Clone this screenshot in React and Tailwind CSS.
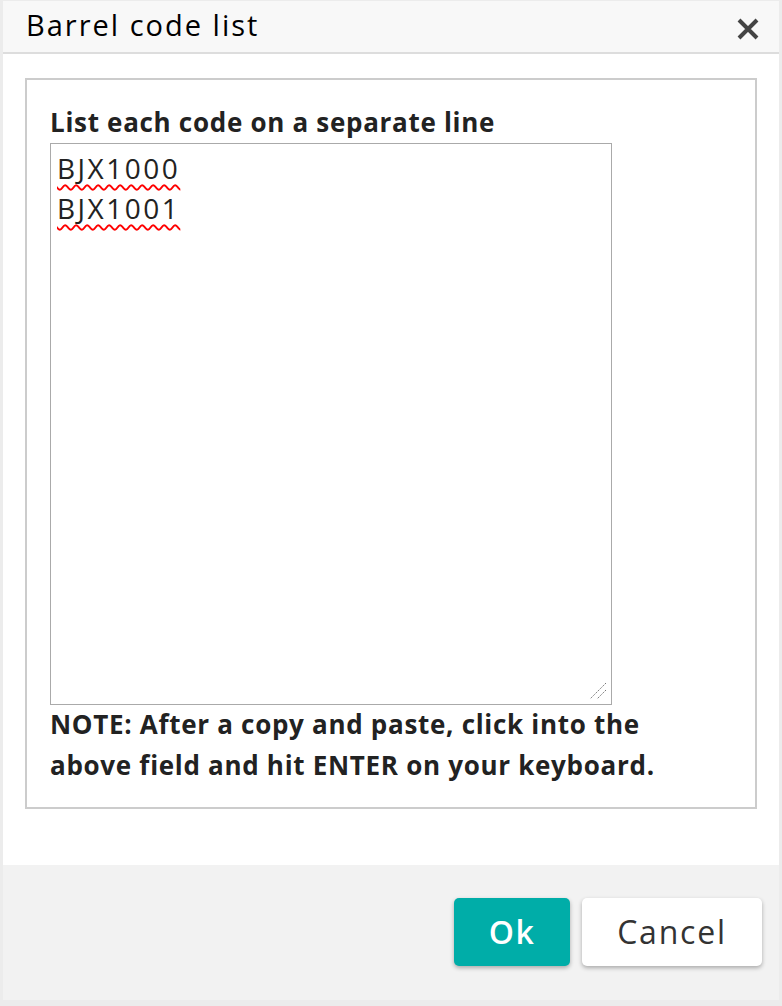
import React from 'react';

const codes = ['BJX1000', 'BJX1001'];

const CloseIcon = () => (
  <svg width="24" height="24" viewBox="0 0 24 24" fill="none">
    <path d="M3 3 L21 21 M21 3 L3 21" stroke="#444" strokeWidth="4" strokeLinecap="butt" />
  </svg>
);

const ResizeGrip = () => (
  <svg width="20" height="20" viewBox="0 0 20 20" className="absolute right-[3px] bottom-[3px]">
    <path d="M18 2 L2 18 M18 9 L9 18" stroke="#777" strokeWidth="1" strokeDasharray="1.5 1" />
  </svg>
);

const App = () => {
  return (
    <div className="w-[782px] h-[1006px] bg-[#ececec] pt-[1px] pl-[3px] pr-[3px] pb-[6px] font-['Open_Sans',sans-serif] text-[#222]">
      <div className="h-full flex flex-col bg-white">
        <div className="h-[53px] flex items-center justify-between pl-[23px] pr-[19px] bg-[#f8f8f8] border-b-2 border-[#dddddd]">
          <h1 className="mb-[4px] text-[29px] font-medium tracking-[2px] text-black leading-none">Barrel code list</h1>
          <button className="mt-[5px]"><CloseIcon /></button>
        </div>

        <div className="flex-1 px-[22px] pt-[24px]">
          <div className="h-[731px] border-2 border-[#cccccc] pl-[23px] pt-[24px]">
            <label className="block mb-[3px] text-[26px] font-bold tracking-[0.7px] leading-[36px] text-[#222]">
              List each code on a separate line
            </label>
            <div className="relative w-[562px] h-[562px] border border-[#aaaaaa] px-[6px] pt-[4px] text-[28px] tracking-[2.5px] leading-[40px] text-[#222]">
              {codes.map((code) => (
                <div key={code}>
                  <span className="underline decoration-wavy decoration-[#ff0000] decoration-2 underline-offset-[5px]">{code}</span>
                </div>
              ))}
              <ResizeGrip />
            </div>
            <p className="mt-[-1px] w-[640px] text-[26px] font-bold tracking-[0.7px] leading-[41px] text-[#222]">
              NOTE: After a copy and paste, click into the above field and hit ENTER on your keyboard.
            </p>
          </div>
        </div>

        <div className="h-[135px] bg-[#f2f2f2] flex items-start justify-end gap-[12px] pt-[33px] pr-[17px]">
          <button className="w-[116px] h-[68px] rounded-[5px] bg-[#00ada8] text-white text-[32px] font-semibold tracking-[1.5px] shadow-[0_2px_4px_rgba(0,0,0,0.3)]">
            Ok
          </button>
          <button className="w-[180px] h-[68px] rounded-[5px] bg-white text-[#333] text-[32px] tracking-[1.8px] shadow-[0_2px_4px_rgba(0,0,0,0.3)]">
            Cancel
          </button>
        </div>
      </div>
    </div>
  );
};

export default App;
